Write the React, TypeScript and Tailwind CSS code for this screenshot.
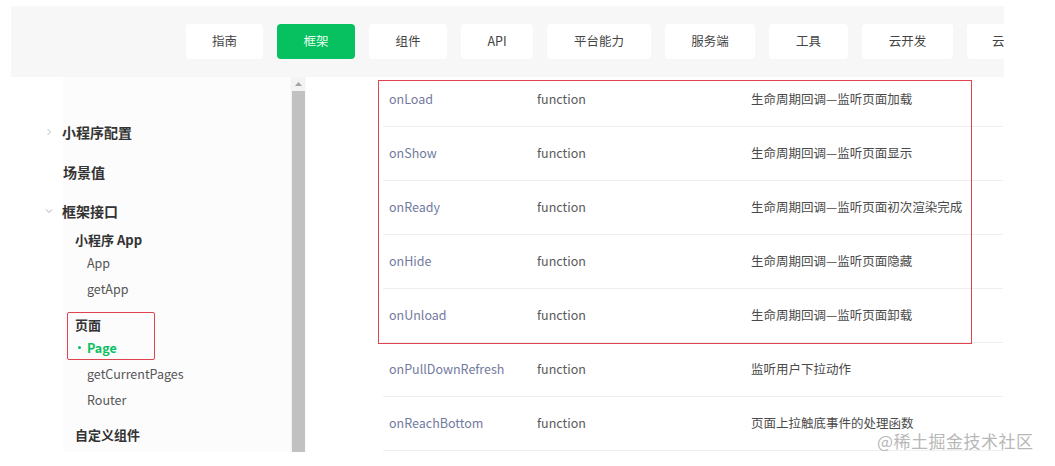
import React from "react";

const tabs: { label: string; w: string; active?: boolean; clip?: boolean }[] = [
  { label: "指南", w: "w-[77px]" },
  { label: "框架", w: "w-[78px]", active: true },
  { label: "组件", w: "w-[78px]" },
  { label: "API", w: "w-[72px]" },
  { label: "平台能力", w: "w-[104px]" },
  { label: "服务端", w: "w-[90px]" },
  { label: "工具", w: "w-[79px]" },
  { label: "云开发", w: "w-[91px]" },
  { label: "云", w: "w-[90px]", clip: true },
];

const rows = [
  ["onLoad", "function", "生命周期回调—监听页面加载"],
  ["onShow", "function", "生命周期回调—监听页面显示"],
  ["onReady", "function", "生命周期回调—监听页面初次渲染完成"],
  ["onHide", "function", "生命周期回调—监听页面隐藏"],
  ["onUnload", "function", "生命周期回调—监听页面卸载"],
  ["onPullDownRefresh", "function", "监听用户下拉动作"],
  ["onReachBottom", "function", "页面上拉触底事件的处理函数"],
];

function Chevron({ down }: { down?: boolean }) {
  return (
    <svg width="10" height="10" viewBox="0 0 10 10" className="shrink-0">
      {down ? (
        <path d="M2 3.5 L5 6.5 L8 3.5" fill="none" stroke="#aaa" strokeWidth="1" />
      ) : (
        <path d="M3.5 2 L6.5 5 L3.5 8" fill="none" stroke="#bbb" strokeWidth="1" />
      )}
    </svg>
  );
}

export default function App() {
  return (
    <div className="relative w-[1055px] h-[466px] overflow-hidden bg-white font-['Noto_Sans_CJK_SC',sans-serif] text-[#333]">
      {/* top nav */}
      <div className="pt-[6px] pl-[11px]">
        <div className="w-[993px] h-[71px] bg-[#f7f7f7] overflow-hidden flex items-start pt-[18px] pl-[175px] gap-[14px]">
          {tabs.map((t) => (
            <div
              key={t.label}
              className={`${t.w} h-[35px] shrink-0 rounded-[4px] flex items-center text-[12.5px] ${
                t.clip ? "justify-start pl-[25px]" : "justify-center"
              } ${t.active ? "bg-[#07c160] text-[#e8fff1]" : "bg-white text-[#444]"}`}
            >
              {t.label}
            </div>
          ))}
        </div>
      </div>

      <div className="flex h-[375px]">
        {/* sidebar */}
        <div className="w-[290px] flex">
          <div className="w-[63px] bg-white" />
          <div className="flex-1 bg-[#fcfcfc]">
            <div className="flex flex-col pt-[45px]">
              <div className="h-[20px] flex items-center gap-[8px] -ml-[19px]">
                <Chevron />
                <span className="text-[14px] font-bold">小程序配置</span>
              </div>
              <div className="h-[20px] mt-[20px] flex items-center text-[14px] font-bold">场景值</div>
              <div className="h-[20px] mt-[19px] flex items-center gap-[8px] -ml-[19px]">
                <Chevron down />
                <span className="text-[14px] font-bold">框架接口</span>
              </div>
              <div className="ml-[12px] mt-[9px] h-[20px] flex items-center text-[13px] font-bold">小程序 App</div>
              <div className="ml-[24px] mt-[3px] h-[20px] flex items-center text-[12.5px] text-[#555]">App</div>
              <div className="ml-[24px] mt-[6px] h-[20px] flex items-center text-[12.5px] text-[#555]">getApp</div>
              <div className="ml-[4px] mt-[13px] w-[88px] h-[48px] border-[1.5px] border-[#e0424f] rounded-[2px] pl-[7px] flex flex-col justify-center">
                <div className="text-[13px] font-bold leading-[20px]">页面</div>
                <div className="flex items-center leading-[20px] mt-[3px]">
                  <span className="w-[3px] h-[3px] rounded-full bg-[#07c160] ml-[3px] mr-[6px]" />
                  <span className="text-[12.5px] font-bold text-[#07c160]">Page</span>
                </div>
              </div>
              <div className="ml-[24px] mt-[4px] h-[20px] flex items-center text-[12.5px] text-[#555]">getCurrentPages</div>
              <div className="ml-[24px] mt-[6px] h-[20px] flex items-center text-[12.5px] text-[#555]">Router</div>
              <div className="ml-[12px] mt-[15px] h-[20px] flex items-center text-[13px] font-bold">自定义组件</div>
            </div>
          </div>
        </div>

        {/* scrollbar */}
        <div className="w-[16px] h-[375px] flex flex-col items-center bg-[#f3f3f3] border-l border-r border-[#fafafa]">
          <div className="h-[14px] flex items-center justify-center">
            <svg width="7" height="4" viewBox="0 0 7 4">
              <path d="M0 4 L3.5 0 L7 4 Z" fill="#a3a3a3" />
            </svg>
          </div>
          <div className="w-[13px] h-[361px] bg-[#c1c1c1]" />
        </div>

        {/* content */}
        <div className="relative flex-1 overflow-hidden">
          <div className="ml-[77px] w-[620px] -mt-[4px]">
            {rows.map((r) => (
              <div key={r[0]} className="h-[54px] flex items-center border-b border-[#efefef] text-[12.5px]">
                <div className="w-[154px] pl-[6px] text-[#737aa0]">{r[0]}</div>
                <div className="w-[214px] text-[#5a5a5a]">{r[1]}</div>
                <div className="text-[#4a4a4a]">{r[2]}</div>
              </div>
            ))}
          </div>
          {/* annotation box */}
          <div className="absolute left-[72px] top-[3px] w-[594px] h-[264px] border-[1.5px] border-[#e0424f] pointer-events-none" />
        </div>
      </div>

      {/* watermark */}
      <div className="absolute left-[877px] top-[428px] text-[17px] text-[#b8b8b8] tracking-[0.5px]">@稀土掘金技术社区</div>
    </div>
  );
}
